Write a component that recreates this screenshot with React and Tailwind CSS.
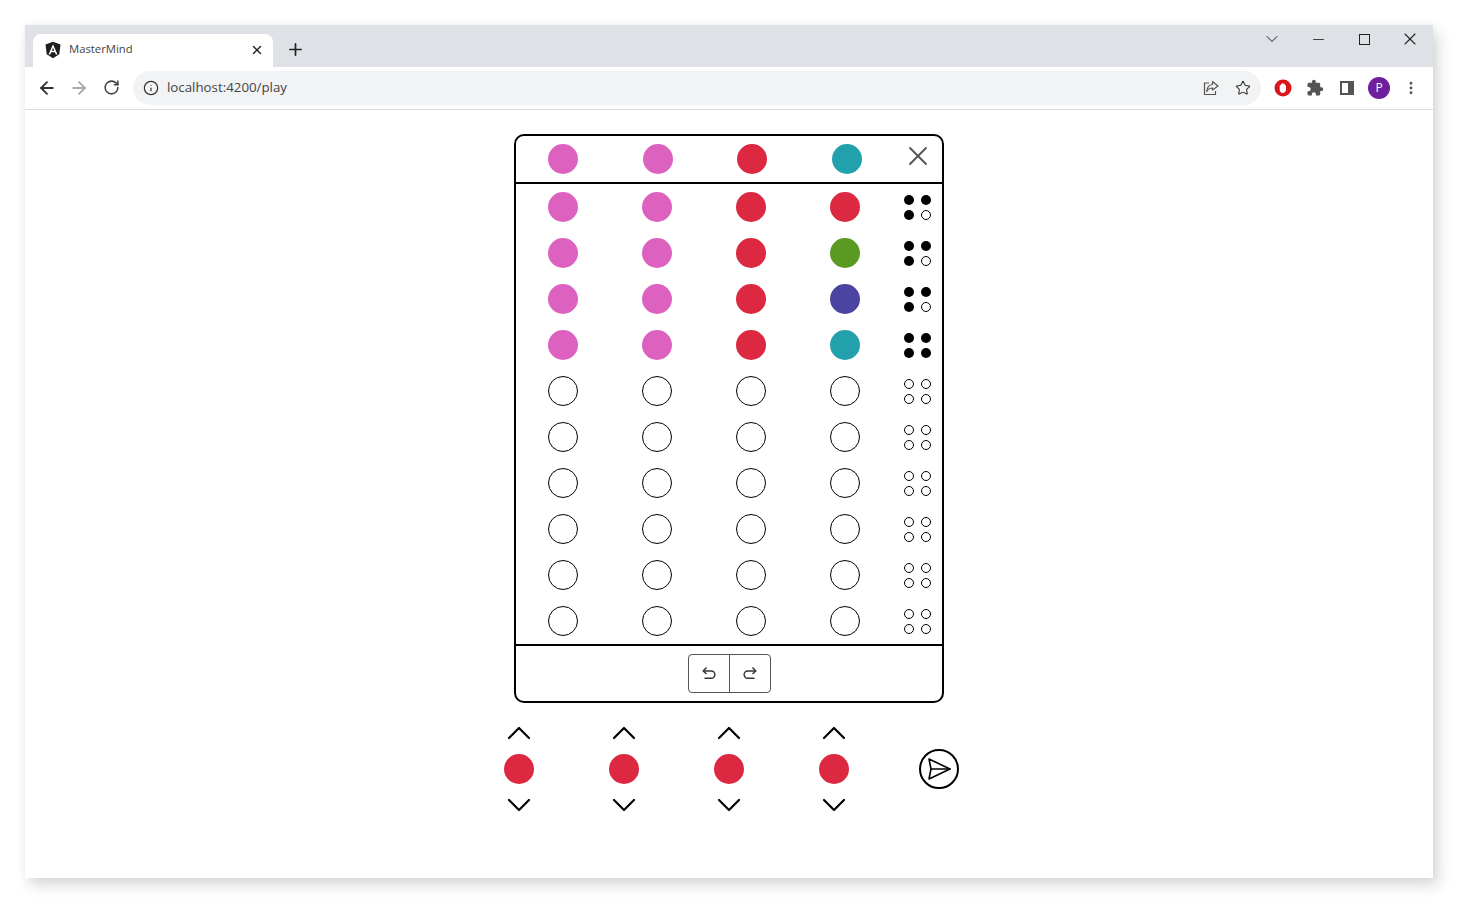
import { ArrowLeft, ArrowRight, RotateCw, Info, Star, X, Plus, Minus, ChevronDown, ChevronUp, EllipsisVertical } from "lucide-react";
import { MdExtension } from "react-icons/md";

const PINK = "bg-[#dd62c0]";
const RED = "bg-[#dc2840]";
const TEAL = "bg-[#22a1ac]";
const GREEN = "bg-[#5a9a22]";
const BLUE = "bg-[#4b44a0]";
const EMPTY = "border border-black bg-white";

const rows = [
  { colors: [PINK, PINK, RED, RED], pegs: [1, 1, 1, 0] },
  { colors: [PINK, PINK, RED, GREEN], pegs: [1, 1, 1, 0] },
  { colors: [PINK, PINK, RED, BLUE], pegs: [1, 1, 1, 0] },
  { colors: [PINK, PINK, RED, TEAL], pegs: [1, 1, 1, 1] },
  ...Array.from({ length: 6 }, () => ({ colors: [EMPTY, EMPTY, EMPTY, EMPTY], pegs: [0, 0, 0, 0] })),
];

function Dot({ color }) {
  return <div className={"h-[30px] w-[30px] shrink-0 rounded-full " + color}></div>;
}

function Pegs({ pegs }) {
  return (
    <div className="ml-[44px] grid grid-cols-[10px_10px] gap-x-[7px] gap-y-[5px]">
      {pegs.map((p, i) => (
        <div key={i} className={"h-[10px] w-[10px] rounded-full " + (p ? "bg-black" : "border border-black bg-white")}></div>
      ))}
    </div>
  );
}

function AngularLogo() {
  return (
    <svg width="18" height="18" viewBox="0 0 24 24">
      <path d="M12 1 2 4.6l1.6 13L12 23l8.4-5.4 1.6-13z" fill="#1e1e1e" />
      <path d="M12 4.2 6 18h2.3l1.2-3h5l1.2 3H18zM10.4 13 12 9l1.6 4z" fill="#fff" fillRule="evenodd" />
    </svg>
  );
}

function ShareIcon() {
  return (
    <svg width="16" height="16" viewBox="0 0 16 16" fill="none" stroke="#555" strokeWidth="1.2">
      <path d="M6 3H1.5v11.5h11V11" />
      <path d="M9.5 1.5 15 6l-5.500 4V8C7 8 5 9 3.800 11.500 4 7.500 6 4.800 9.500 4.500z" strokeLinejoin="round" />
    </svg>
  );
}

function BlockerIcon() {
  return (
    <svg width="18" height="18" viewBox="0 0 18 18">
      <circle cx="9" cy="9" r="8.500" fill="#d9151c" />
      <g transform="translate(1.600 1.800) scale(0.82)">
        <path d="M5 6c0-1 1.400-1 1.500 0V4.300c0-1.100 1.500-1.100 1.500 0V3.500c0-1.100 1.800-1.100 1.800 0v.8c0-1.100 1.500-1.100 1.500 0V6c0-.9 1.400-.9 1.400 0v5c0 2.300-1.900 4-4 4s-3.700-1.700-3.700-4z" fill="#fff" />
      </g>
    </svg>
  );
}

function PanelIcon() {
  return (
    <svg width="14" height="14" viewBox="0 0 14 14">
      <path d="M0 0h14v14H0zM2 2v10h6V2z" fill="#555" fillRule="evenodd" />
    </svg>
  );
}

function SendIcon() {
  return (
    <svg width="26" height="24" viewBox="0 0 26 24" fill="none" stroke="#000" strokeWidth="1.600" strokeLinejoin="round" strokeLinecap="round">
      <path d="M3 2 24 12 3 22 5 12z" />
      <path d="M5 12H24" />
    </svg>
  );
}

function UndoIcon() {
  return (
    <svg width="16" height="16" viewBox="0 0 16 16" fill="none" stroke="#333" strokeWidth="1.400">
      <path d="M5.500 1.500 2.200 5l3.300 3" />
      <path d="M2.500 5h7.800a3 3 0 0 1 0 7.200H3.500" />
    </svg>
  );
}

function RedoIcon() {
  return (
    <svg width="16" height="16" viewBox="0 0 16 16" fill="none" stroke="#333" strokeWidth="1.400">
      <path d="M10.500 1.500 13.800 5l-3.300 3" />
      <path d="M13.500 5H5.700a3 3 0 0 0 0 7.200h6.800" />
    </svg>
  );
}

function Picker() {
  return (
    <div className="flex h-[112px] w-[30px] flex-col items-center justify-between">
      <ChevronUp size={40} strokeWidth={1.300} className="shrink-0 text-black" />
      <Dot color={RED} />
      <ChevronDown size={40} strokeWidth={1.300} className="shrink-0 text-black" />
    </div>
  );
}

function TabBar() {
  return (
    <div className="flex h-[42px] bg-[#dee1e6] pl-[8px]">
      <div className="mt-[9px] flex h-[33px] w-[240px] items-center rounded-t-[8px] bg-white pb-[2px] pl-[11px] pr-[9px]">
        <AngularLogo />
        <span className="ml-[7px] text-[11.300px] text-[#444]">MasterMind</span>
        <X size={14} strokeWidth={2.400} className="ml-auto text-[#222]" />
      </div>
      <div className="ml-[8px] mt-[9px] flex h-[33px] w-[28px] items-center justify-center pb-[2px]">
        <Plus size={19} strokeWidth={2.200} className="text-[#222]" />
      </div>
      <div className="ml-auto flex h-[28px] text-[#222]">
        <div className="flex w-[46px] items-center justify-center">
          <ChevronDown size={20} strokeWidth={1.200} />
        </div>
        <div className="flex w-[46px] items-center justify-center">
          <Minus size={17} strokeWidth={1.200} />
        </div>
        <div className="flex w-[46px] items-center justify-center">
          <div className="h-[11px] w-[11px] border border-[#222]"></div>
        </div>
        <div className="flex w-[46px] items-center justify-center">
          <X size={20} strokeWidth={1.300} />
        </div>
      </div>
    </div>
  );
}

function Toolbar() {
  return (
    <div className="flex h-[43px] items-center border-b border-[#dadce0] bg-white pb-[1px] pl-[6px]">
      <div className="flex w-[32px] justify-center text-[#333]"><ArrowLeft size={20} strokeWidth={2.200} /></div>
      <div className="flex w-[32px] justify-center text-[#aaa]"><ArrowRight size={20} strokeWidth={2.200} /></div>
      <div className="flex w-[32px] justify-center text-[#444]"><RotateCw size={17} strokeWidth={2.200} /></div>
      <div className="ml-[6px] flex h-[34px] w-[1128px] items-center rounded-full bg-[#f1f3f4] pl-[10px] pr-[2px]">
        <Info size={16} strokeWidth={1.800} className="text-[#333]" />
        <span className="ml-[8px] pt-[1px] text-[13.300px] text-[#444]">localhost:4200/play</span>
        <div className="ml-auto flex w-[32px] justify-center"><ShareIcon /></div>
        <div className="flex w-[32px] justify-center"><Star size={16} strokeWidth={1.600} className="text-[#333]" /></div>
      </div>
      <div className="ml-[6px] flex w-[32px] justify-center"><BlockerIcon /></div>
      <div className="flex w-[32px] justify-center text-[#555]"><MdExtension size={18} /></div>
      <div className="flex w-[32px] justify-center"><PanelIcon /></div>
      <div className="flex w-[32px] justify-center">
        <div className="flex h-[22px] w-[22px] items-center justify-center rounded-full bg-[#6f1ea0] text-[12px] text-white">P</div>
      </div>
      <div className="flex w-[32px] justify-center text-[#555]"><EllipsisVertical size={16} strokeWidth={2.400} /></div>
    </div>
  );
}

function Board() {
  return (
    <div className="mx-auto w-[430px] rounded-[10px] border-2 border-black">
      <div className="flex h-[48px] items-center border-b-2 border-black pl-[32px]">
        <div className="flex w-[314px] gap-[64.67px]">
          <Dot color={PINK} />
          <Dot color={PINK} />
          <Dot color={RED} />
          <Dot color={TEAL} />
        </div>
        <X size={32} strokeWidth={1.400} className="mb-[6px] ml-[40px] shrink-0 text-[#555]" />
      </div>
      <div className="flex flex-col gap-[16px] py-[8px] pl-[32px]">
        {rows.map((row, i) => (
          <div key={i} className="flex items-center">
            <div className="flex gap-[64px]">
              {row.colors.map((c, j) => <Dot key={j} color={c} />)}
            </div>
            <Pegs pegs={row.pegs} />
          </div>
        ))}
      </div>
      <div className="flex h-[57px] justify-center border-t-2 border-black pt-[8px]">
        <div className="flex h-[39px] w-[83px] rounded-[4px] border border-[#555]">
          <div className="flex w-[41px] items-center justify-center border-r border-[#555]"><UndoIcon /></div>
          <div className="flex flex-1 items-center justify-center"><RedoIcon /></div>
        </div>
      </div>
    </div>
  );
}

export default function App() {
  return (
    <div className="h-[903px] w-[1458px] bg-white pl-[25px] pt-[25px] font-['Open_Sans',sans-serif]">
      <div className="h-[853px] w-[1408px] bg-white shadow-[5px_7px_14px_rgba(0,0,0,0.16),0_0_8px_rgba(0,0,0,0.04)]">
        <TabBar />
        <Toolbar />
        <div className="pt-[24px]">
          <Board />
          <div className="ml-[479px] mt-[10px] flex items-center">
            <div className="flex gap-[75px]">
              <Picker />
              <Picker />
              <Picker />
              <Picker />
            </div>
            <div className="ml-[70px] flex h-[40px] w-[40px] items-center justify-center rounded-full border-2 border-black">
              <SendIcon />
            </div>
          </div>
        </div>
      </div>
    </div>
  );
}
